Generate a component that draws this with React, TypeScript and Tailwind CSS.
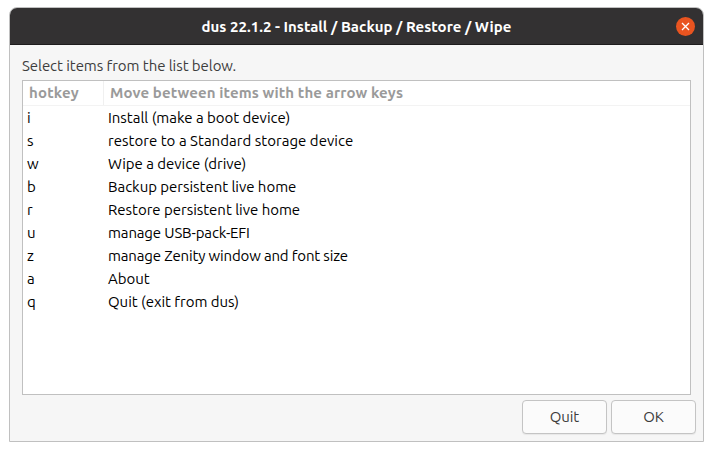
import React from "react";

const items = [
  { key: "i", text: "Install (make a boot device)", tracking: "tracking-[-0.02px]" },
  { key: "s", text: "restore to a Standard storage device", tracking: "tracking-[0.03px]" },
  { key: "w", text: "Wipe a device (drive)", tracking: "tracking-[-0.03px]" },
  { key: "b", text: "Backup persistent live home", tracking: "tracking-[-0.03px]" },
  { key: "r", text: "Restore persistent live home", tracking: "tracking-[-0.02px]" },
  { key: "u", text: "manage USB-pack-EFI", tracking: "tracking-[-0.14px]" },
  { key: "z", text: "manage Zenity window and font size", tracking: "tracking-[-0.16px]" },
  { key: "a", text: "About", tracking: "" },
  { key: "q", text: "Quit (exit from dus)", tracking: "tracking-[-0.03px]" },
];

function DialogButton({ children }: { children: React.ReactNode }) {
  return (
    <button className="h-[34px] w-[85px] rounded-[4px] border border-[#c4c4c4] bg-[#fbfbfb] text-center leading-[32px] tracking-[-0.1px] text-[#3d3d3d] shadow-[0_1px_1px_rgba(0,0,0,0.06)]">
      {children}
    </button>
  );
}

export default function App() {
  return (
    <div className="h-[451px] w-[713px] overflow-hidden bg-white pt-[7px] pl-[9px] font-['Ubuntu','Noto_Sans',sans-serif] text-[15px]">
      <div className="flex h-[435px] w-[695px] flex-col overflow-hidden rounded-t-[8px] border border-[#c0c0c0] bg-[#f6f6f6]">
        <header className="grid h-[37px] shrink-0 grid-cols-[1fr_auto_1fr] items-center border-b border-[#1e1c1d] bg-[#333132] pr-[8px]">
          <h1 className="col-start-2 pt-[2px] pl-[8px] leading-[22px] font-bold tracking-[0.02px] text-white">dus 22.1.2 - Install / Backup / Restore / Wipe</h1>
          <button aria-label="Close" className="flex size-[19px] items-center justify-center justify-self-end rounded-full bg-[#e95420]">
            <svg width="9" height="9" viewBox="0 0 9 9" fill="none" stroke="white" strokeWidth="1.3">
              <path d="M1 1 L8 8 M8 1 L1 8" />
            </svg>
          </button>
        </header>
        <main className="flex flex-1 flex-col pr-[12px] pl-[12px]">
          <p className="h-[35px] pt-[10px] leading-[22px] tracking-[-0.06px] text-[#3d3d3d]">Select items from the list below.</p>
          <div className="h-[315px] border border-[#c0c0c0] bg-white text-black">
            <div className="flex h-[25px] border-b border-[#f3f3f3] leading-[24px] font-bold text-[#9a9a9a]">
              <div className="w-[81px] border-r border-[#f0f0f0] pl-[6px] tracking-[0.2px]">hotkey</div>
              <div className="pl-[6px] tracking-[0.12px]">Move between items with the arrow keys</div>
            </div>
            {items.map((item) => (
              <div key={item.key} className="flex h-[23px] leading-[24px]">
                <div className="w-[85px] pl-[4px]">{item.key}</div>
                <div className={item.tracking}>{item.text}</div>
              </div>
            ))}
          </div>
        </main>
        <footer className="flex shrink-0 justify-end gap-[4px] pr-[7px] pb-[7px]">
          <DialogButton>Quit</DialogButton>
          <DialogButton>OK</DialogButton>
        </footer>
      </div>
    </div>
  );
}
